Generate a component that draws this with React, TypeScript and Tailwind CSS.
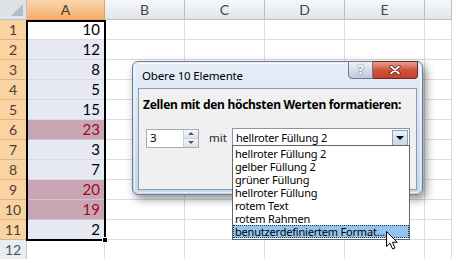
import { Fragment } from "react";

const values: { v: number; hot?: boolean }[] = [
  { v: 10 },
  { v: 12 },
  { v: 8 },
  { v: 5 },
  { v: 15 },
  { v: 23, hot: true },
  { v: 3 },
  { v: 7 },
  { v: 20, hot: true },
  { v: 19, hot: true },
  { v: 2 },
];

const options = [
  "hellroter Füllung 2",
  "gelber Füllung 2",
  "grüner Füllung",
  "hellroter Füllung",
  "rotem Text",
  "rotem Rahmen",
  "benutzerdefiniertem Format...",
];

const sheetFont = { fontFamily: "Lato, 'Noto Sans', sans-serif" };
const uiFont = { fontFamily: "'Noto Sans', 'Open Sans', sans-serif" };

const ColHeader = ({ label, active }: { label: string; active?: boolean }) => (
  <div
    className={
      "flex h-[20px] items-center justify-center border-r border-b text-[14px] " +
      (active
        ? "border-[#e3a15f] bg-gradient-to-b from-[#fbd7ae] to-[#f6ad6c] text-[#3b3b3b]"
        : "border-[#b9c0ca] bg-gradient-to-b from-[#f6f7f9] to-[#e1e5ea] text-[#3b4656]")
    }
  >
    {label}
  </div>
);

const RowHeader = ({ n, active }: { n: number; active?: boolean }) => (
  <div
    className={
      "flex h-[20px] items-center justify-center border-r border-b text-[14px] " +
      (active
        ? "border-[#e2b37a] bg-[#f9d3a1] text-[#4a4030]"
        : "border-[#c5cbd3] bg-[#e9edf2] text-[#4a5566]")
    }
  >
    {n}
  </div>
);

const Cursor = () => (
  <svg width="12" height="19" viewBox="0 0 12 19" className="absolute left-[386px] top-[231px]">
    <path
      d="M0.5 0.5 L0.5 15.5 L4 12.2 L6.6 18 L9 17 L6.5 11.3 L11.2 11.3 Z"
      fill="#fff"
      stroke="#000"
      strokeWidth="1"
      strokeLinejoin="round"
    />
  </svg>
);

export default function App() {
  return (
    <div className="relative h-[259px] w-[452px] overflow-hidden bg-white" style={sheetFont}>
      {/* sheet */}
      <div className="grid grid-cols-[27px_78px_80px_80px_80px_80px_1fr]">
        <div className="relative h-[20px] border-r border-b border-[#b9c0ca] bg-[#dfe3e8]">
          <div className="absolute right-[3px] bottom-[3px] h-0 w-0 border-l-[12px] border-l-transparent [border-bottom:12px_solid_#b4bcc6]" />
        </div>
        <ColHeader label="A" active />
        <ColHeader label="B" />
        <ColHeader label="C" />
        <ColHeader label="D" />
        <ColHeader label="E" />
        <ColHeader label="" />

        {Array.from({ length: 12 }).map((_, i) => {
          const cell = values[i];
          return (
            <Fragment key={i}>
              <RowHeader n={i + 1} active={!!cell} />
              <div
                className={
                  "flex h-[20px] items-center justify-end border-r border-b pr-[4px] text-[15px] " +
                  (!cell
                    ? "border-[#dadcdd] bg-white"
                    : cell.hot
                    ? "border-[#cfc6d4] bg-[#caa6b4] text-[#9c0a1e]"
                    : i === 0
                    ? "border-[#d9dce6] bg-white text-black"
                    : "border-[#d9dce6] bg-[#e6e8f2] text-black")
                }
              >
                {cell ? cell.v : ""}
              </div>
              {[0, 1, 2, 3, 4].map((c) => (
                <div key={c} className="h-[20px] border-r border-b border-[#dadcdd]" />
              ))}
            </Fragment>
          );
        })}
      </div>

      {/* selection frame */}
      <div className="absolute left-[26px] top-[20px] h-[221px] w-[80px] border-2 border-black" />
      <div className="absolute left-[102px] top-[237px] h-[6px] w-[6px] border border-white bg-black" />

      {/* dialog */}
      <div
        className="absolute left-[132px] top-[61px] h-[134px] w-[291px] rounded-[6px] border border-[#6f7f93] bg-gradient-to-b from-[#e6eef8] via-[#d3e1f1] to-[#c3d6eb] shadow-[3px_4px_10px_rgba(0,0,0,0.45)]"
        style={uiFont}
      >
        <div className="absolute inset-[1px] rounded-[5px] border border-white/60" />
        <div className="relative flex h-[26px] items-center pl-[9px] pt-[2px] text-[11.5px] tracking-[-0.15px] text-black">
          Obere 10 Elemente
        </div>

        {/* title buttons */}
        <div className="absolute right-[4px] top-[-1px] flex">
          <div className="flex h-[18px] w-[25px] items-center justify-center rounded-bl-[4px] border border-[#6d7a8c] bg-gradient-to-b from-[#eef2f7] via-[#d5dde7] to-[#bfcad8] text-[12px] font-bold leading-none text-white [text-shadow:0_0_2px_#3a4658]">
            ?
          </div>
          <div className="flex h-[18px] w-[45px] items-center justify-center rounded-br-[4px] border border-l-0 border-[#6e2a22] bg-gradient-to-b from-[#e8a192] via-[#d0513d] to-[#c7402d]">
            <svg width="12" height="10" viewBox="0 0 12 10">
              <path d="M2 1.5 L10 8.5 M10 1.5 L2 8.5" stroke="#4a1a14" strokeWidth="3.2" strokeLinecap="round" />
              <path d="M2 1.5 L10 8.5 M10 1.5 L2 8.5" stroke="#fff" strokeWidth="1.8" strokeLinecap="round" />
            </svg>
          </div>
        </div>

        {/* client area */}
        <div className="absolute left-[5px] right-[5px] top-[26px] bottom-[4px] border border-[#8a9bb3] bg-[#f0f0f0]">
          <div className="pl-[4px] pt-[7px] text-[12px] font-bold tracking-[-0.28px] text-black">
            Zellen mit den höchsten Werten formatieren:
          </div>
          <div className="mt-[14px] flex items-center pl-[7px]">
            <div className="flex h-[19px] w-[53px] border border-[#a5acb5] bg-white">
              <div className="flex flex-1 items-center pl-[3px] text-[11.5px] text-black">3</div>
              <div className="flex w-[15px] flex-col border-l border-[#c9cfd6]">
                <div className="flex flex-1 items-center justify-center border-b border-[#c9cfd6] bg-gradient-to-b from-[#f7f8fa] to-[#dfe3e8]">
                  <div className="h-0 w-0 border-x-[3px] border-b-[3px] border-x-transparent border-b-[#4c5664]" />
                </div>
                <div className="flex flex-1 items-center justify-center bg-gradient-to-b from-[#f2f4f7] to-[#dde1e7]">
                  <div className="h-0 w-0 border-x-[3px] border-t-[3px] border-x-transparent border-t-[#4c5664]" />
                </div>
              </div>
            </div>
            <div className="ml-[10px] w-[23px] text-[11.5px] text-[#222]">mit</div>
            <div className="flex h-[20px] w-[178px] items-center border border-[#8a95a3] bg-white">
              <div className="flex-1 pl-[3px] text-[11px] tracking-[-0.2px] text-black">hellroter Füllung 2</div>
              <div className="mr-[1px] flex h-[16px] w-[16px] items-center justify-center border border-[#8d9fb6] bg-gradient-to-b from-[#e9f1fa] to-[#c4d7ec]">
                <div className="h-0 w-0 border-x-[4px] border-t-[4px] border-x-transparent border-t-black" />
              </div>
            </div>
          </div>
        </div>
      </div>

      {/* dropdown list */}
      <div
        className="absolute left-[232px] top-[145px] w-[178px] border border-[#646464] bg-white py-[1px]"
        style={uiFont}
      >
        {options.map((o, i) => (
          <div
            key={o}
            className={
              "flex h-[13px] items-center text-[11px] leading-[13px] tracking-[-0.2px] text-black " +
              (i === options.length - 1
                ? "border border-dotted border-[#1b3d66] bg-[#94c3ec] pl-[1px]"
                : "pl-[2px]")
            }
          >
            {o}
          </div>
        ))}
      </div>

      <Cursor />
    </div>
  );
}
